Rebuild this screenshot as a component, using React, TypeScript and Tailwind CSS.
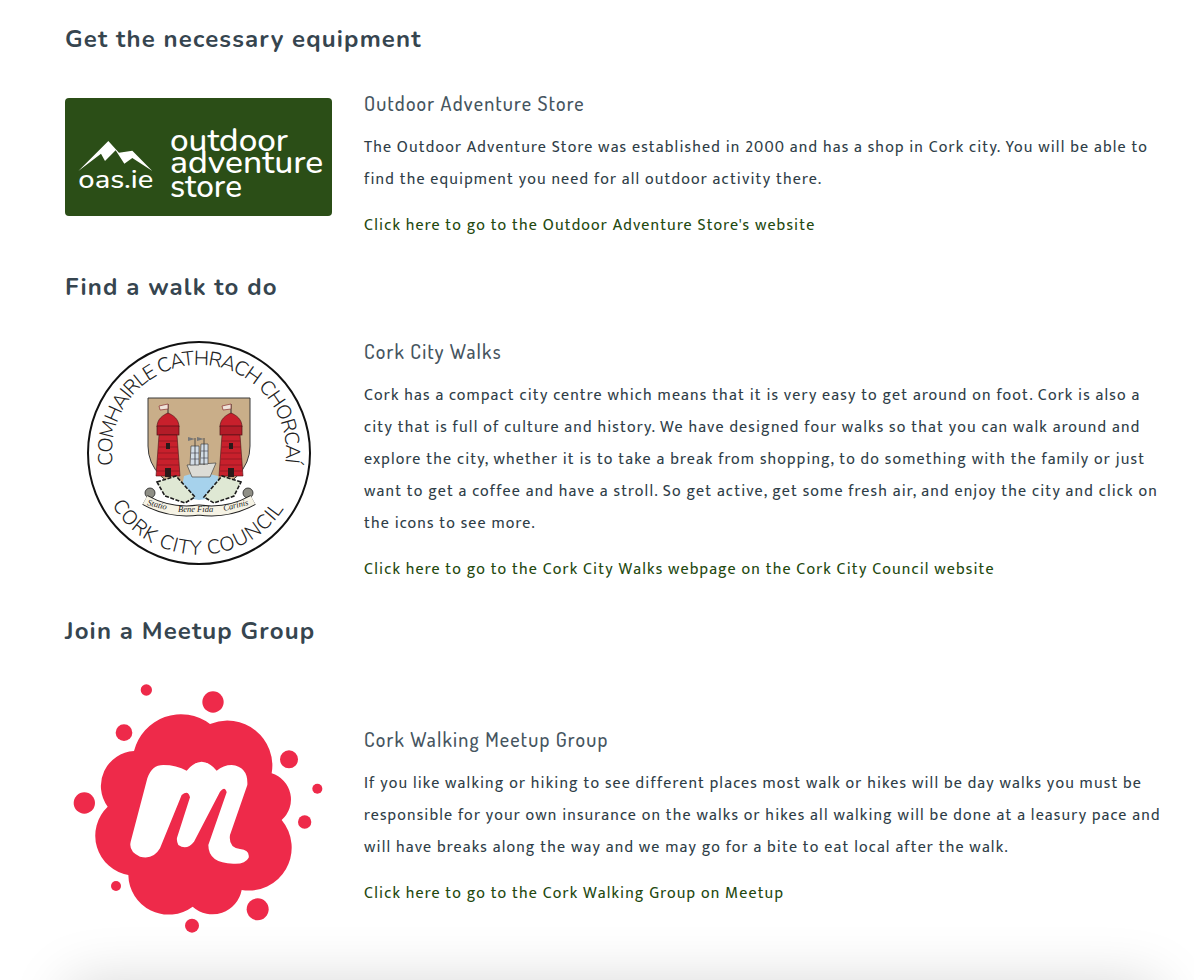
function OasLogo() {
  return (
    <svg viewBox="30 24 801 354" className="w-[267px] h-[118px] shrink-0">
      <rect x="30" y="24" width="801" height="354" rx="12" fill="#2b4e17" />
      <path
        d="M70 243 L160 153 L192 188 L232 182 L292 243 L232 204 L208 221 L182 181 L150 213 L138 191 Z"
        fill="#fff"
      />
      <g fill="#fff" fontFamily="Nunito, sans-serif" fontWeight="500">
        <text x="70" y="295" fontSize="80" textLength="225" lengthAdjust="spacingAndGlyphs">oas.ie</text>
        <text x="345" y="182" fontSize="96" textLength="354" lengthAdjust="spacingAndGlyphs">outdoor</text>
        <text x="345" y="250" fontSize="96" textLength="460" lengthAdjust="spacingAndGlyphs">adventure</text>
        <text x="345" y="320" fontSize="96" textLength="216" lengthAdjust="spacingAndGlyphs">store</text>
      </g>
    </svg>
  );
}

function Tower({ x }: { x: number }) {
  return (
    <g transform={`translate(${x} 0)`}>
      <path d="M0 414 V404" stroke="#333" strokeWidth="1" />
      <path d="M0 404 L-9 406 L-8 410 L0 409 Z" fill="#efe3da" stroke="#8a3030" strokeWidth="0.7" />
      <path d="M-11 427 C-11 419 -5 415 0 413 C5 415 11 419 11 427 Z" fill="#c8202c" stroke="#4a1015" strokeWidth="0.6" />
      <rect x="-11" y="426" width="22" height="9" fill="#b31c28" stroke="#4a1015" strokeWidth="0.7" />
      <path d="M-9 435 H9 L12 476 H-12 Z" fill="#c8202c" stroke="#4a1015" strokeWidth="0.6" />
      <path
        d="M-9 441 H9 M-9 447 H10 M-10 453 H10 M-10 459 H11 M-11 465 H11 M-11 471 H12"
        stroke="#7a1620"
        strokeWidth="0.6"
      />
      <rect x="-2" y="443" width="4" height="6" fill="#2a1a1a" />
      <rect x="-3" y="468" width="6" height="9" fill="#2a1a1a" />
    </g>
  );
}

function CouncilLogo() {
  return (
    <svg viewBox="65 340 267 244" className="w-[267px] h-[244px] shrink-0">
      <circle cx="199" cy="453" r="111" fill="#fff" stroke="#111" strokeWidth="2" />
      <defs>
        <path id="council-top" d="M113 465 A87 87 0 1 1 285 465" />
        <path id="council-bottom" d="M112 505 A101 101 0 0 0 286 505" />
      </defs>
      <g fill="#222" fontFamily="Nunito, sans-serif" fontWeight="300" fontSize="20">
        <text>
          <textPath href="#council-top" textLength="297">COMHAIRLE CATHRACH CHORCAÍ</textPath>
        </text>
        <text>
          <textPath href="#council-bottom" textLength="205">CORK CITY COUNCIL</textPath>
        </text>
      </g>
      <path d="M148 398 H250 V446 Q250 480 199 498 Q148 480 148 446 Z" fill="#c9ae89" stroke="#3a3a3a" strokeWidth="1" />
      <Tower x={168} />
      <Tower x={231} />
      <path d="M184 476 Q199 470 218 476 L220 497 L199 500 L180 497 Z" fill="#a6d2ec" />
      <path d="M157 482 L176 476 L195 497 L185 503 L165 496 Z" fill="#dfe8d4" stroke="#1c1c1c" strokeWidth="1.6" strokeDasharray="4 1.5" />
      <path d="M241 482 L222 476 L204 497 L214 503 L234 496 Z" fill="#dfe8d4" stroke="#1c1c1c" strokeWidth="1.6" strokeDasharray="4 1.5" />
      <path d="M187 465 L216 463 L210 477 H192 Z" fill="#dcdcd6" stroke="#444" strokeWidth="0.7" />
      <path d="M191 446 H199 V465 H190 Z M201 444 H208 V464 H200 Z" fill="#d3dde6" stroke="#444" strokeWidth="0.7" />
      <path d="M191 453 H199 M191 459 H199 M201 451 H208 M201 458 H208" stroke="#556" strokeWidth="0.7" />
      <path d="M195 438 V465 M204 438 V465" stroke="#333" strokeWidth="0.8" />
      <path d="M188 437 L195 439 L188 441 Z M197 437 L204 439 L197 441 Z" fill="#777" />
      <circle cx="150" cy="493" r="5" fill="#8f8f86" stroke="#222" strokeWidth="0.8" />
      <circle cx="248" cy="493" r="5" fill="#8f8f86" stroke="#222" strokeWidth="0.8" />
      <path d="M145 500 Q170 514 199 510 Q228 514 253 500" fill="none" stroke="#222" strokeWidth="11" />
      <path d="M145 500 Q170 514 199 510 Q228 514 253 500" fill="none" stroke="#f6f3e5" strokeWidth="9" />
      <g fill="#222" fontFamily="'Liberation Serif', serif" fontStyle="italic" fontSize="8.5">
        <text x="147" y="505" transform="rotate(14 147 505)">Statio</text>
        <text x="178" y="512">Bene Fida</text>
        <text x="224" y="511" transform="rotate(-14 224 511)">Carinis</text>
      </g>
    </svg>
  );
}

function MeetupLogo() {
  const dots = [
    [259, 45, 17], [459, 81, 32], [192, 173, 25], [687, 253, 27], [772, 341, 15],
    [734, 441, 20], [73, 384, 32], [168, 633, 15], [593, 703, 33], [396, 752, 21],
  ];
  return (
    <svg viewBox="15 27 801 816" className="w-[267px] h-[272px] shrink-0">
      <g fill="#ee2a4a">
        <path d="M450 147 A135 135 0 0 1 635 295 A82 82 0 0 1 665 435 A129 129 0 0 1 545 645 A89 89 0 0 1 398 695 A121 121 0 0 1 205 600 A120 120 0 0 1 143 395 A105 105 0 0 1 222 228 A145 145 0 0 1 450 147 Z" />
        {dots.map(([cx, cy, r]) => (
          <circle key={`${cx}-${cy}`} cx={cx} cy={cy} r={r} />
        ))}
      </g>
      <path
        d="M212 500 L262 310 Q275 270 310 270 Q350 270 380 287 Q400 262 425 260 Q450 262 470 287 Q490 270 515 270 Q565 275 562 330 L510 480 Q505 518 540 522 Q570 525 566 548 Q556 568 520 566 Q445 565 445 510 L500 352 Q495 332 480 350 L402 500 Q380 528 355 510 Q348 495 352 485 L390 367 Q385 343 365 360 L300 520 Q280 555 240 545 Q205 530 212 500 Z"
        fill="#fff"
      />
    </svg>
  );
}

function Heading({ children }: { children: React.ReactNode }) {
  return (
    <h2 className="h-[36px] mb-[35px] text-[24px] leading-[36px] font-bold tracking-[1.15px] text-[#36454f] font-['Nunito','Lato',sans-serif]">
      {children}
    </h2>
  );
}

function Info({ title, lines, link }: { title: string; lines: string[]; link: string }) {
  return (
    <div className="font-['Mukta','Open_Sans',sans-serif] text-[16px] tracking-[1.15px] text-[#2f3e48]">
      <h3 className="h-[24px] mb-[16px] text-[20px] leading-[22px] font-medium tracking-[1.2px] text-[#465560] font-['Dosis','Lato',sans-serif]">
        {title}
      </h3>
      <p className="leading-[32px] whitespace-nowrap">
        {lines.map((line) => (
          <span key={line} className="block">{line}</span>
        ))}
      </p>
      <a href="#" className="block mt-[14px] leading-[32px] text-[#24490f]">{link}</a>
    </div>
  );
}

export default function App() {
  return (
    <div className="h-[980px] overflow-hidden bg-white">
      <main className="pt-[21px] pl-[65px]">
        <Heading>Get the necessary equipment</Heading>
        <div className="flex items-start gap-[32px]">
          <div className="pt-[6px]">
            <OasLogo />
          </div>
          <Info
            title="Outdoor Adventure Store"
            lines={[
              "The Outdoor Adventure Store was established in 2000 and has a shop in Cork city. You will be able to",
              "find the equipment you need for all outdoor activity there.",
            ]}
            link="Click here to go to the Outdoor Adventure Store's website"
          />
        </div>

        <div className="mt-[27px]">
          <Heading>Find a walk to do</Heading>
        </div>
        <div className="flex items-start gap-[32px]">
          <CouncilLogo />
          <Info
            title="Cork City Walks"
            lines={[
              "Cork has a compact city centre which means that it is very easy to get around on foot. Cork is also a",
              "city that is full of culture and history. We have designed four walks so that you can walk around and",
              "explore the city, whether it is to take a break from shopping, to do something with the family or just",
              "want to get a coffee and have a stroll. So get active, get some fresh air, and enjoy the city and click on",
              "the icons to see more.",
            ]}
            link="Click here to go to the Cork City Walks webpage on the Cork City Council website"
          />
        </div>

        <div className="mt-[27px]">
          <Heading>Join a Meetup Group</Heading>
        </div>
        <div className="flex items-start gap-[32px]">
          <MeetupLogo />
          <div className="pt-[44px]">
            <Info
              title="Cork Walking Meetup Group"
              lines={[
                "If you like walking or hiking to see different places most walk or hikes will be day walks you must be",
                "responsible for your own insurance on the walks or hikes all walking will be done at a leasury pace and",
                "will have breaks along the way and we may go for a bite to eat local after the walk.",
              ]}
              link="Click here to go to the Cork Walking Group on Meetup"
            />
          </div>
        </div>
      </main>
      <footer className="ml-[70px] w-[1087px] h-[60px] mt-[29px] bg-white shadow-[0_0_60px_rgba(0,0,0,0.18)]" />
    </div>
  );
}
